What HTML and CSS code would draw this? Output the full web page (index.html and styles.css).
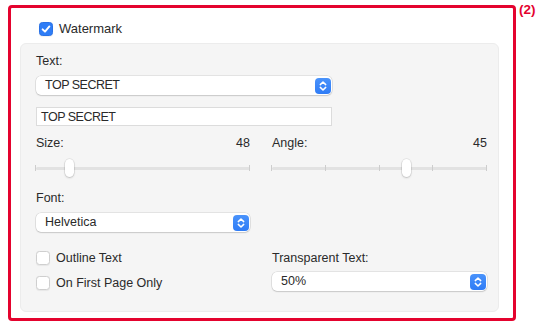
FILE: index.html
```html
<!DOCTYPE html>
<html lang="en">
<head>
    <meta charset="utf-8">
    <title>Watermark</title>
    <link rel="stylesheet" href="styles.css">
</head>
<body>
    <div class="callout">
        <div class="head-row">
            <span class="check on">
                <svg viewBox="0 0 14 14" width="14" height="14"><path d="M3.6 7.3 L6 9.7 L10.4 4.4" fill="none" stroke="#fff" stroke-width="1.9" stroke-linecap="round" stroke-linejoin="round"/></svg>
            </span>
            <span>Watermark</span>
        </div>

        <div class="panel">
            <div class="label first">Text:</div>
            <div class="popup wide">
                <span class="caps">TOP SECRET</span>
                <span class="stepper">
                    <svg viewBox="0 0 16 16" width="16" height="16"><path d="M5.3 6.6 L8 4 L10.7 6.6 M5.3 9.4 L8 12 L10.7 9.4" fill="none" stroke="#fff" stroke-width="1.5" stroke-linecap="round" stroke-linejoin="round"/></svg>
                </span>
            </div>
            <div class="field"><span class="caps">TOP SECRET</span></div>

            <div class="cols sliders">
                <div class="col">
                    <div class="label split"><span>Size:</span><span>48</span></div>
                    <div class="slider">
                        <span class="track"></span>
                        <span class="tick" style="left: 0%"></span>
                        <span class="tick" style="left: 100%"></span>
                        <span class="knob" style="left: 13.6%"></span>
                    </div>
                </div>
                <div class="col">
                    <div class="label split"><span>Angle:</span><span>45</span></div>
                    <div class="slider">
                        <span class="track"></span>
                        <span class="tick" style="left: 0%"></span>
                        <span class="tick" style="left: 25%"></span>
                        <span class="tick" style="left: 50%"></span>
                        <span class="tick" style="left: 75%"></span>
                        <span class="tick" style="left: 100%"></span>
                        <span class="knob" style="left: 60.5%"></span>
                    </div>
                </div>
            </div>

            <div class="label font-label">Font:</div>
            <div class="cols">
                <div class="col">
                    <div class="popup">
                        <span>Helvetica</span>
                        <span class="stepper">
                            <svg viewBox="0 0 16 16" width="16" height="16"><path d="M5.3 6.6 L8 4 L10.7 6.6 M5.3 9.4 L8 12 L10.7 9.4" fill="none" stroke="#fff" stroke-width="1.5" stroke-linecap="round" stroke-linejoin="round"/></svg>
                        </span>
                    </div>
                </div>
                <div class="col"></div>
            </div>

            <div class="cols bottom">
                <div class="col">
                    <div class="check-row"><span class="check"></span><span>Outline Text</span></div>
                    <div class="check-row"><span class="check"></span><span>On First Page Only</span></div>
                </div>
                <div class="col">
                    <div class="label">Transparent Text:</div>
                    <div class="popup pct">
                        <span>50%</span>
                        <span class="stepper">
                            <svg viewBox="0 0 16 16" width="16" height="16"><path d="M5.3 6.6 L8 4 L10.7 6.6 M5.3 9.4 L8 12 L10.7 9.4" fill="none" stroke="#fff" stroke-width="1.5" stroke-linecap="round" stroke-linejoin="round"/></svg>
                        </span>
                    </div>
                </div>
            </div>
        </div>
    </div>
    <div class="num">(2)</div>
</body>
</html>
```

FILE: styles.css
```css
body {
    margin: 0;
    padding: 5px 0 0 8px;
    display: flex;
    align-items: flex-start;
    gap: 3px;
    background: #ffffff;
    font-family: 'Liberation Sans', Arial, sans-serif;
    font-size: 12.5px;
    color: #2a2a2a;
}

.callout {
    width: 479px;
    height: 290px;
    border: 3px solid #e4032e;
    border-radius: 4px;
    padding: 14px 14px 6px 9px;
    display: flex;
    flex-direction: column;
    flex-shrink: 0;
}

.num {
    color: #e4032e;
    font-weight: bold;
    font-size: 13.5px;
    line-height: 14px;
    margin-top: -2px;
}

.head-row {
    display: flex;
    align-items: center;
    gap: 6px;
    height: 14px;
    line-height: 14px;
    margin-left: 19px;
    margin-bottom: 7px;
    font-size: 13px;
}

.check {
    width: 14px;
    height: 14px;
    box-sizing: border-box;
    border-radius: 3.5px;
    background: #ffffff;
    border: 1px solid #cfcfcf;
    box-shadow: 0 0.5px 1px rgba(0, 0, 0, 0.06);
    flex-shrink: 0;
    display: block;
}

.check.on {
    background: #2f7df6;
    border-color: #2a72e6;
}

.check svg {
    display: block;
    margin: -1px;
}

.panel {
    flex: 1;
    background: #f5f5f5;
    border: 1px solid #ececec;
    border-radius: 6px;
    padding: 10px 12px 0 15px;
}

.label {
    line-height: 14px;
    height: 14px;
}

.label.first {
    margin-bottom: 8px;
}

.split {
    display: flex;
    justify-content: space-between;
}

.caps {
    letter-spacing: -0.5px;
}

.popup {
    position: relative;
    height: 19px;
    line-height: 19px;
    background: #ffffff;
    border-radius: 5px;
    box-shadow: 0 0 0 0.5px rgba(0, 0, 0, 0.14), 0 1px 1.5px rgba(0, 0, 0, 0.12);
    padding-left: 9px;
}

.popup.wide {
    width: 287px;
}

.stepper {
    position: absolute;
    right: 1px;
    top: 1.5px;
    width: 16px;
    height: 16px;
    border-radius: 4px;
    background: linear-gradient(#4a93fb, #2f7cf6);
}

.stepper svg {
    display: block;
}

.field {
    width: 296px;
    height: 19px;
    line-height: 18px;
    margin-top: 12px;
    background: #ffffff;
    border: 1px solid #dcdcdc;
    box-sizing: border-box;
    padding-left: 4px;
}

.cols {
    display: grid;
    grid-template-columns: 214px 215px;
    column-gap: 22px;
}

.sliders {
    margin-top: 10px;
}

.slider {
    position: relative;
    height: 18px;
    margin-top: 9px;
}

.track {
    position: absolute;
    left: 0;
    right: 0;
    top: 7.5px;
    height: 3px;
    background: #e2e2e2;
    border-radius: 1.5px;
}

.tick {
    position: absolute;
    top: 6px;
    width: 1px;
    height: 6px;
    margin-left: -1px;
    background: #cdcdcd;
}

.knob {
    position: absolute;
    top: 0;
    width: 9px;
    height: 18px;
    box-sizing: border-box;
    border-radius: 4.5px;
    background: #ffffff;
    box-shadow: 0 0 0 0.5px rgba(0, 0, 0, 0.12), 0 1px 2px rgba(0, 0, 0, 0.18);
}

.font-label {
    margin-top: 14px;
    margin-bottom: 8px;
}

.bottom {
    margin-top: 19px;
}

.check-row {
    display: flex;
    align-items: center;
    gap: 6px;
    height: 14px;
    line-height: 14px;
    margin-bottom: 11px;
}

.popup.pct {
    margin-top: 7px;
}
```
